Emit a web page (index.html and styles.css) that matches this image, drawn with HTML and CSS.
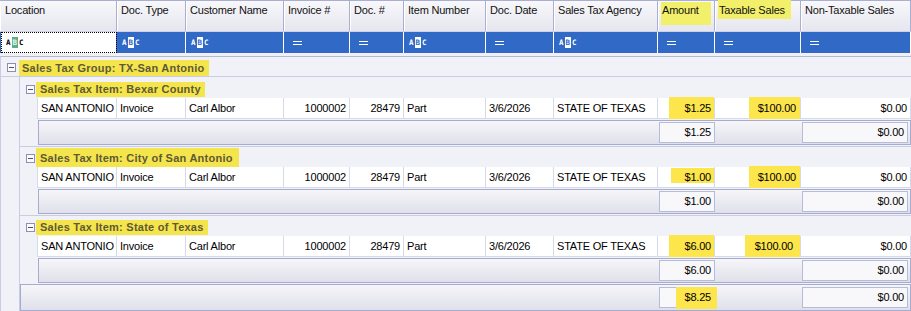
FILE: index.html
```html
<!DOCTYPE html>
<html>
<head>
<meta charset="utf-8">
<link rel="stylesheet" href="styles.css">
</head>
<body>
<div class="grid">
  <div class="cols hdr">
    <div class="hc first">Location</div>
    <div class="hc">Doc. Type</div>
    <div class="hc">Customer Name</div>
    <div class="hc">Invoice #</div>
    <div class="hc">Doc. #</div>
    <div class="hc">Item Number</div>
    <div class="hc">Doc. Date</div>
    <div class="hc">Sales Tax Agency</div>
    <div class="hc"><span class="hh hh-amt">Amount</span></div>
    <div class="hc"><span class="hh hh-tax">Taxable Sales</span></div>
    <div class="hc">Non-Taxable Sales</div>
  </div>
  <div class="cols filt">
    <div class="fc focus"><span class="abc"><i>A</i><b>B</b><i>C</i></span></div>
    <div class="fc"><span class="abc"><i>A</i><b>B</b><i>C</i></span></div>
    <div class="fc"><span class="abc"><i>A</i><b>B</b><i>C</i></span></div>
    <div class="fc eqc"><span class="eq"></span></div>
    <div class="fc eqc"><span class="eq"></span></div>
    <div class="fc"><span class="abc"><i>A</i><b>B</b><i>C</i></span></div>
    <div class="fc eqc"><span class="eq"></span></div>
    <div class="fc"><span class="abc"><i>A</i><b>B</b><i>C</i></span></div>
    <div class="fc eqc"><span class="eq"></span></div>
    <div class="fc eqc"><span class="eq"></span></div>
    <div class="fc eqc"><span class="eq"></span></div>
  </div>
  <div class="gap"></div>
  <div class="body">
    <div class="grow"><span class="exp"></span><span class="glabel">Sales Tax Group: TX-San Antonio</span></div>
    <div class="children">

      <div class="item">
        <div class="irow"><span class="exp"></span><span class="ilabel">Sales Tax Item: Bexar County</span></div>
        <div class="cols drow">
          <div class="dc">SAN ANTONIO</div>
          <div class="dc">Invoice</div>
          <div class="dc">Carl Albor</div>
          <div class="dc r">1000002</div>
          <div class="dc r">28479</div>
          <div class="dc">Part</div>
          <div class="dc">3/6/2026</div>
          <div class="dc">STATE OF TEXAS</div>
          <div class="dc r hlc"><span class="hl hl-amt">$1.25</span></div>
          <div class="dc r hlc"><span class="hl hl-tax">$100.00</span></div>
          <div class="dc r">$0.00</div>
        </div>
        <div class="ifoot">
          <div class="cols fbox">
            <div></div><div></div><div></div><div></div><div></div><div></div><div></div><div></div>
            <div class="sum">$1.25</div>
            <div></div>
            <div class="sum last">$0.00</div>
          </div>
        </div>
      </div>

      <div class="item">
        <div class="irow"><span class="exp"></span><span class="ilabel tall">Sales Tax Item: City of San Antonio</span></div>
        <div class="cols drow">
          <div class="dc">SAN ANTONIO</div>
          <div class="dc">Invoice</div>
          <div class="dc">Carl Albor</div>
          <div class="dc r">1000002</div>
          <div class="dc r">28479</div>
          <div class="dc">Part</div>
          <div class="dc">3/6/2026</div>
          <div class="dc">STATE OF TEXAS</div>
          <div class="dc r hlc"><span class="hl hl-amt short">$1.00</span></div>
          <div class="dc r hlc"><span class="hl hl-tax">$100.00</span></div>
          <div class="dc r">$0.00</div>
        </div>
        <div class="ifoot">
          <div class="cols fbox">
            <div></div><div></div><div></div><div></div><div></div><div></div><div></div><div></div>
            <div class="sum">$1.00</div>
            <div></div>
            <div class="sum last">$0.00</div>
          </div>
        </div>
      </div>

      <div class="item lastitem">
        <div class="irow"><span class="exp"></span><span class="ilabel">Sales Tax Item: State of Texas</span></div>
        <div class="cols drow">
          <div class="dc">SAN ANTONIO</div>
          <div class="dc">Invoice</div>
          <div class="dc">Carl Albor</div>
          <div class="dc r">1000002</div>
          <div class="dc r">28479</div>
          <div class="dc">Part</div>
          <div class="dc">3/6/2026</div>
          <div class="dc">STATE OF TEXAS</div>
          <div class="dc r hlc"><span class="hl hl-amt">$6.00</span></div>
          <div class="dc r hlc"><span class="hl hl-tax wide">$100.00</span></div>
          <div class="dc r">$0.00</div>
        </div>
        <div class="ifoot">
          <div class="cols fbox">
            <div></div><div></div><div></div><div></div><div></div><div></div><div></div><div></div>
            <div class="sum">$6.00</div>
            <div></div>
            <div class="sum last">$0.00</div>
          </div>
        </div>
      </div>

      <div class="cols gfoot">
        <div></div><div></div><div></div><div></div><div></div><div></div><div></div><div></div>
        <div class="sum"><span class="hl-sum">$8.25</span></div>
        <div></div>
        <div class="sum last">$0.00</div>
      </div>
    </div>
  </div>
</div>
</body>
</html>
```
FILE: styles.css
```css
* { box-sizing: border-box; }
html, body { margin: 0; padding: 0; background: #ffffff; }
body {
  font-family: "Liberation Sans", Arial, sans-serif;
  font-size: 11px;
  letter-spacing: -0.2px;
  color: #000;
}
.grid {
  width: 911px;
  height: 311px;
  overflow: hidden;
  background: #f1f2f7;
}
.cols {
  display: grid;
  grid-template-columns: var(--c1) 69px 98px 66px 54px 82px 68px 104px 57px 86px 1fr;
}

/* header */
.hdr {
  --c1: 117px;
  height: 32px;
  border-top: 1px solid #a9afd3;
  border-bottom: 1px solid #cfd2e6;
  background: linear-gradient(#f8f8fb, #e5e6ee);
}
.hc {
  border-right: 1px solid #a9afd3;
  box-shadow: inset 1px 0 0 #ffffff;
  padding: 3px 3px 0 4px;
  line-height: 13px;
  color: #111;
  white-space: nowrap;
  overflow: visible;
}
.hc.first { padding-left: 5px; }
.hh { display: inline-block; background: #f2ef6a; }
.hh-amt { margin: -2px 0 0 -1px; padding: 2px 12px 8px 1px; }
.hh-tax { margin: -4px 0 0 -1px; padding: 4px 6px 2px 1px; }

/* filter row */
.filt {
  --c1: 117px;
  height: 21px;
  background: #3169c6;
}
.fc {
  border-right: 1px solid #ffffff;
  display: flex;
  align-items: center;
  padding-left: 5px;
}
.fc.eqc { padding-left: 9px; }
.fc.focus {
  background: #ffffff;
  outline: 1px dotted #000;
  outline-offset: -1px;
  border-right: 1px solid #3169c6;
  margin-left: 1px;
  padding-left: 5px;
}
.abc {
  display: inline-flex;
  align-items: center;
  font: bold 7.5px/1 "DejaVu Sans Mono", monospace;
  letter-spacing: 0;
  color: #ffffff;
}
.abc i { font-style: normal; }
.abc b {
  background: #ffffff;
  color: #3169c6;
  padding: 2px 1px;
  margin: 0 1px;
}
.focus .abc { color: #000; }
.focus .abc b { background: #5cae86; color: #e8f5ee; }
.eq {
  width: 9px;
  height: 4px;
  border-top: 1px solid #ffffff;
  border-bottom: 1px solid #ffffff;
}

.gap { height: 3px; background: #f0f0f5; }

/* body */
.body {
  border-top: 1px solid #b3b8d8;
  border-left: 1px solid #c9cce2;
  height: 255px;
}
.grow {
  height: 20px;
  border-bottom: 1px solid #c9cde3;
  display: flex;
  align-items: flex-start;
  padding: 3px 0 0 6px;
}
.exp {
  width: 9px;
  height: 9px;
  border: 1px solid #8a90b5;
  background: #fbfbfd;
  display: flex;
  align-items: center;
  justify-content: center;
  flex: none;
}
.exp::before {
  content: "";
  width: 5px;
  height: 1px;
  background: #4a4f6e;
}
.grow .exp { margin-top: 3px; }
.glabel {
  margin-left: 3px;
  padding: 0 4px 0 3px;
  height: 16px;
  line-height: 16px;
  background: #f5e54c;
  color: #5e5936;
  font-weight: bold;
  letter-spacing: 0.25px;
}
.children {
  margin-left: 18px;
  border-left: 1px solid #c9cde3;
  padding-top: 1px;
}
.item { border-bottom: 1px solid #c9cde3; }
.item.lastitem { border-bottom: none; }
.irow {
  height: 20px;
  display: flex;
  align-items: flex-start;
  padding: 4px 0 0 6px;
}
.irow .exp { margin-top: 3px; }
.ilabel {
  margin-left: 1px;
  padding: 0 4px 0 4px;
  height: 15px;
  line-height: 15px;
  background: #f5e54c;
  color: #5e5936;
  font-weight: bold;
  letter-spacing: 0.25px;
}
.ilabel.tall {
  margin-top: -3px;
  height: 19px;
  line-height: 21px;
  padding-right: 6px;
}

/* data row */
.drow {
  --c1: 79px;
  margin-left: 17px;
  height: 21px;
  background: #ffffff;
  border-left: 1px solid #d5d9ec;
  border-bottom: 1px solid #d5d9ec;
}
.dc {
  border-right: 1px solid #d5d9ec;
  line-height: 20px;
  padding: 0 3px 0 3px;
  white-space: nowrap;
  overflow: hidden;
}
.dc.r { text-align: right; }
.dc.hlc { padding-right: 0; overflow: visible; }
.hl {
  display: inline-block;
  background: #fde64b;
  line-height: 20px;
  height: 22px;
  margin-top: -1px;
}
.hl-amt { padding: 1px 3px 0 15px; }
.hl-amt.short { height: 15px; line-height: 18px; padding-top: 0; padding-left: 13px; }
.hl-tax { padding: 1px 4px 0 9px; }
.hl-tax.wide { padding-right: 7px; padding-left: 10px; }

/* item footer */
.ifoot {
  height: 27px;
  padding: 1px 0 1px 18px;
}
.fbox, .gfoot {
  height: 25px;
  border: 1px solid #a6acd0;
  background: linear-gradient(#f6f6f9, #dfe0ea);
}
.fbox { --c1: 78px; }
.gfoot {
  --c1: 96px;
  height: 27px;
  margin-left: 0;
}
.sum {
  margin: 1px 0 1px 1px;
  height: 21px;
  line-height: 19px;
  border: 1px solid #b6bbd8;
  background: #f8f8fb;
  text-align: right;
  padding-right: 3px;
  white-space: nowrap;
}
.gfoot .sum { margin-top: 2px; }
.sum.last { margin-right: 2px; }
.hl-sum {
  display: inline-block;
  background: #fde64b;
  line-height: 19px;
  height: 22px;
  padding: 1px 6px 0 8px;
  margin: -1px -6px 0 0;
}
```
